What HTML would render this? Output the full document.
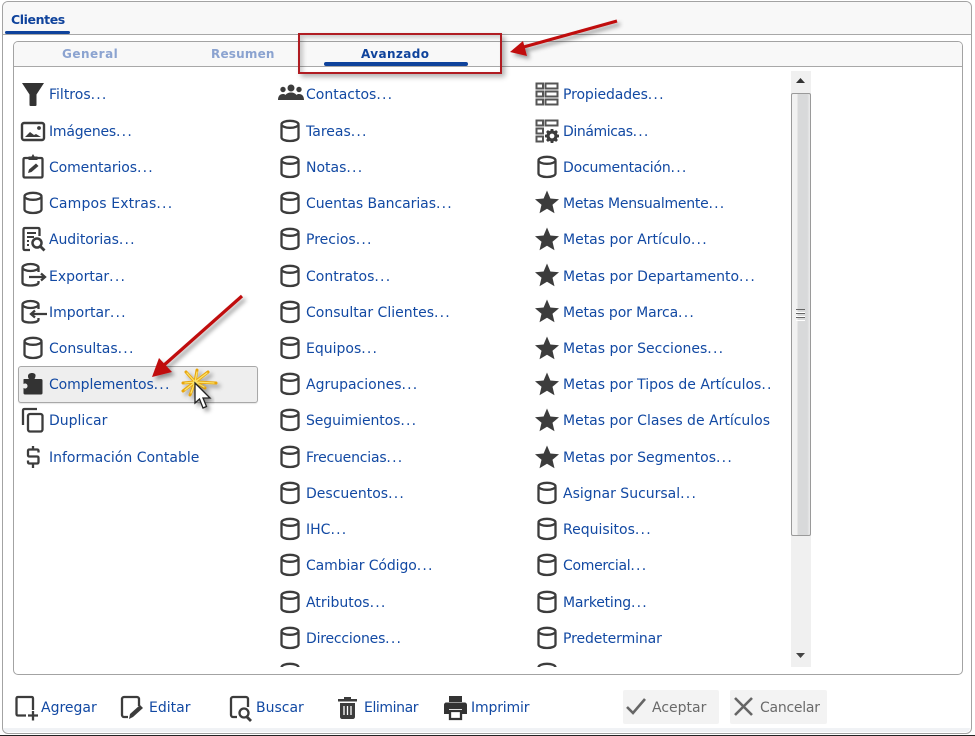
<!DOCTYPE html>
<html><head><meta charset="utf-8">
<style>
html,body{margin:0;padding:0;width:975px;height:736px;overflow:hidden;background:#fff;font-family:"DejaVu Sans","Liberation Sans",sans-serif}
.a{position:absolute}
.t{position:absolute;font-size:14px;line-height:18px;margin-top:1px;color:#1249a3;white-space:nowrap}
.t s{text-decoration:none;letter-spacing:1.2px}
svg.i{position:absolute;width:26px;height:26px;overflow:visible}
</style></head><body>
<svg width="0" height="0" style="position:absolute">
<defs>
<symbol id="db" viewBox="0 0 26 26"><g fill="none" stroke="#3c3c3c" stroke-width="2.300"><path d="M4.500 7v12.500c0 2 3.800 3.500 8.500 3.500s8.500-1.500 8.500-3.500V7"/><ellipse cx="13" cy="6.300" rx="8.500" ry="3.500"/></g></symbol>
<symbol id="star" viewBox="0 0 26 26"><path d="M13 1.500l3.400 8 8.600.7-6.500 5.600 2 8.400L13 19.700 5.500 24.200l2-8.400L1 10.200l8.600-.7z" fill="#3c3c3c"/></symbol>
<symbol id="funnel" viewBox="0 0 26 26"><path d="M2 2h22l-7.500 11.500V24c0 .6-.4 1-1 1h-5c-.6 0-1-.4-1-1V13.500z" fill="#333"/></symbol>
<symbol id="people" viewBox="0 0 26 26"><g fill="#3c3c3c"><circle cx="13" cy="7" r="3.500"/><circle cx="5" cy="8.500" r="2.700"/><circle cx="21" cy="8.500" r="2.700"/><path d="M0 19c0-4 2-6 5-6 1 0 2 .3 2.500 1 1-1.500 3-2.500 5.500-2.500s4.500 1 5.500 2.500c.5-.7 1.500-1 2.500-1 3 0 5 2 5 6z"/></g></symbol>
<symbol id="img" viewBox="0 0 26 26"><rect x="2" y="5" width="22" height="17" rx="2" fill="none" stroke="#3c3c3c" stroke-width="2.400"/><path d="M5 19l5-5 4 3 2-1 5 3z" fill="#3c3c3c"/><circle cx="19" cy="10" r="1.900" fill="#3c3c3c"/></symbol>
<symbol id="clip" viewBox="0 0 26 26"><path d="M9 5H5c-1 0-1.500 .5-1.500 1.500V23c0 1 .5 1.500 1.500 1.500h16c1 0 1.500-.5 1.500-1.500V6.500C22.500 5.500 22 5 21 5h-4" fill="none" stroke="#3c3c3c" stroke-width="2.300"/><path d="M8.500 7V3.500h3L13 1l1.500 2.500h3V7z" fill="#3c3c3c"/><path d="M8 20l1-3.500 7-6 2.500 2.500-7 6z" fill="#3c3c3c"/></symbol>
<symbol id="audit" viewBox="0 0 26 26"><path d="M10 24H5c-1 0-1.500-.5-1.500-1.500V3.500C3.500 2.500 4 2 5 2h13c1 0 1.500.5 1.500 1.500V10" fill="none" stroke="#3c3c3c" stroke-width="2.300"/><path d="M7 7h9M7 11h7M7 15h2M7 19h2" stroke="#3c3c3c" stroke-width="2"/><circle cx="17" cy="17" r="4.500" fill="none" stroke="#3c3c3c" stroke-width="2.500"/><path d="M20 20l4.500 4.500" stroke="#3c3c3c" stroke-width="2.800"/></symbol>
<symbol id="exp" viewBox="0 0 26 26"><g fill="none" stroke="#3c3c3c" stroke-width="2.300"><path d="M1.500 6v14.500c0 2 3.500 3 8 3s8-1 8-3V19M17.500 10V6"/><ellipse cx="9.500" cy="5.500" rx="8" ry="3.500"/><path d="M8 15h16M20 11.500l4 3.500-4 3.500"/></g></symbol>
<symbol id="imp" viewBox="0 0 26 26"><g fill="none" stroke="#3c3c3c" stroke-width="2.300"><path d="M1.500 6v14.500c0 2 3.500 3 8 3s8-1 8-3V19M17.500 10V6"/><ellipse cx="9.500" cy="5.500" rx="8" ry="3.500"/><path d="M10 15h16M14 11.500L10 15l4 3.500"/></g></symbol>
<symbol id="puz" viewBox="0 0 26 26"><path d="M4 9h5c-1-1-1-2-1-3 0-2 2-3 4-3s4 1 3.500 3c0 1-.5 2-1 3H21c1 0 1.500.5 1.500 1.500V23c0 1-.5 1.500-1.500 1.500H5c-1 0-1.500-.5-1.500-1.500v-5c1.500 1 4 .5 4-2s-2.500-3-4-2v-4.500C3.500 9.500 3.500 9 4 9z" fill="#333"/></symbol>
<symbol id="dup" viewBox="0 0 26 26"><g fill="none" stroke="#3c3c3c" stroke-width="2.300"><path d="M3 18V3.500C3 2.500 3.500 2 4.500 2H17"/><rect x="8" y="7" width="14.500" height="17.500" rx="2"/></g></symbol>
<symbol id="usd" viewBox="0 0 26 26"><path d="M18.500 8.500V7c0-1-.5-1.500-1.500-1.500H9.500C8.500 5.500 8 6 8 7v4c0 1 .5 1.500 1.500 1.500h7.500c1 0 1.500.5 1.500 1.500v4c0 1-.5 1.500-1.500 1.500H9.500C8.500 19.500 8 19 8 18v-1.500M13 2v3.500M13 19.500V24" fill="none" stroke="#3c3c3c" stroke-width="2.300"/></symbol>
<symbol id="prop" viewBox="0 0 26 26"><g fill="none" stroke="#555" stroke-width="2"><rect x="2.500" y="2.500" width="6.500" height="5"/><rect x="11.500" y="2.500" width="12" height="5"/><rect x="2.500" y="10.500" width="6.500" height="5"/><rect x="11.500" y="10.500" width="12" height="5"/><rect x="2.500" y="18.500" width="6.500" height="5"/><rect x="11.500" y="18.500" width="12" height="5"/></g></symbol>
<symbol id="din" viewBox="0 0 26 26"><g fill="none" stroke="#555" stroke-width="2"><rect x="2.500" y="2.500" width="6.500" height="5"/><rect x="11.500" y="2.500" width="12" height="5"/><rect x="2.500" y="10.500" width="6.500" height="5"/><rect x="2.500" y="18.500" width="6.500" height="5"/></g><circle cx="18" cy="18" r="4" fill="none" stroke="#3c3c3c" stroke-width="3.200"/><path d="M18 11v3M18 22v3M11 18h3M22 18h3M13 13l2 2M21 21l2 2M13 23l2-2M21 15l2-2" stroke="#3c3c3c" stroke-width="2.800"/></symbol>
</defs>
</svg>

<!-- outer frame -->
<div class="a" style="left:2px;top:1px;width:968px;height:731px;border:1px solid #a3a3a3;border-radius:6px;background:#fff"></div>
<div class="a" style="left:3px;top:2px;width:968px;height:32px;background:#f8f8f8;border-radius:5px 5px 0 0;border-bottom:1px solid #a8a8a8"></div>
<div class="a" style="left:3px;top:728px;width:967px;height:4px;background:#f0f2f5;border-radius:0 0 5px 5px"></div>
<div class="a" style="left:0;top:735px;width:975px;height:1px;background:#222"></div>
<div class="a" style="left:11px;top:11px;font-size:12.500px;font-weight:bold;line-height:18px;color:#0f439c;letter-spacing:-.4px">Clientes</div>
<div class="a" style="left:5px;top:31px;width:65px;height:3px;background:#0f439c;border-radius:2px"></div>

<!-- panel -->
<div class="a" style="left:13px;top:41px;width:948px;height:632px;border:1px solid #a3a3a3;border-radius:5px;background:#fff"></div>
<div class="a" style="left:14px;top:42px;width:948px;height:24px;background:#f8f8f8;border-bottom:1px solid #a8a8a8;border-radius:4px 4px 0 0"></div>
<div class="a" style="left:62px;top:45px;font-size:12px;font-weight:bold;line-height:18px;color:#8ba3d0;letter-spacing:.5px">General</div>
<div class="a" style="left:211px;top:45px;font-size:12px;font-weight:bold;line-height:18px;color:#8ba3d0;letter-spacing:.2px">Resumen</div>
<div class="a" style="left:361px;top:45px;font-size:12px;font-weight:bold;line-height:18px;color:#0f439c;letter-spacing:.4px">Avanzado</div>
<div class="a" style="left:324px;top:62px;width:144px;height:4px;background:#0f439c;border-radius:2px"></div>
<div class="a" style="left:298px;top:33px;width:200px;height:37px;border:2px solid #b01c22;box-shadow:3px 3px 5px rgba(0,0,0,.3),inset 3px 3px 5px rgba(0,0,0,.2)"></div>

<!-- highlighted row -->
<div class="a" style="left:18px;top:366px;width:238px;height:35px;background:#eeeeee;border:1px solid #a8a8a8;border-radius:3px;box-shadow:0 1px 1px rgba(0,0,0,.1)"></div>

<!-- column 1 -->
<svg class="i" style="left:20px;top:81px"><use href="#funnel"/></svg><div class="t" style="left:49px;top:85px">Filtros<s>...</s></div>
<svg class="i" style="left:20px;top:118px"><use href="#img"/></svg><div class="t" style="left:49px;top:122px;letter-spacing:-.2px">Imágenes<s>...</s></div>
<svg class="i" style="left:20px;top:153px"><use href="#clip"/></svg><div class="t" style="left:49px;top:158px;letter-spacing:-.1px">Comentarios<s>...</s></div>
<svg class="i" style="left:20px;top:190px"><use href="#db"/></svg><div class="t" style="left:49px;top:194px;letter-spacing:.15px">Campos Extras<s>...</s></div>
<svg class="i" style="left:20px;top:226px"><use href="#audit"/></svg><div class="t" style="left:49px;top:230px;letter-spacing:-.1px">Auditorias<s>...</s></div>
<svg class="i" style="left:21px;top:262px"><use href="#exp"/></svg><div class="t" style="left:49px;top:267px">Exportar<s>...</s></div>
<svg class="i" style="left:21px;top:299px"><use href="#imp"/></svg><div class="t" style="left:49px;top:303px">Importar<s>...</s></div>
<svg class="i" style="left:20px;top:335px"><use href="#db"/></svg><div class="t" style="left:49px;top:339px">Consultas<s>...</s></div>
<svg class="i" style="left:20px;top:370px"><use href="#puz"/></svg><div class="t" style="left:49px;top:375px;letter-spacing:-.1px">Complementos<s>...</s></div>
<svg class="i" style="left:20px;top:407px"><use href="#dup"/></svg><div class="t" style="left:49px;top:411px">Duplicar</div>
<svg class="i" style="left:20px;top:444px"><use href="#usd"/></svg><div class="t" style="left:49px;top:448px">Información Contable</div>

<!-- column 2 -->
<svg class="i" style="left:278px;top:81px"><use href="#people"/></svg><div class="t" style="left:306px;top:85px">Contactos<s>...</s></div>
<svg class="i" style="left:277px;top:118px"><use href="#db"/></svg><div class="t" style="left:306px;top:122px">Tareas<s>...</s></div>
<svg class="i" style="left:277px;top:154px"><use href="#db"/></svg><div class="t" style="left:306px;top:158px">Notas<s>...</s></div>
<svg class="i" style="left:277px;top:190px"><use href="#db"/></svg><div class="t" style="left:306px;top:194px;letter-spacing:-.05px">Cuentas Bancarias<s>...</s></div>
<svg class="i" style="left:277px;top:226px"><use href="#db"/></svg><div class="t" style="left:306px;top:230px">Precios<s>...</s></div>
<svg class="i" style="left:277px;top:263px"><use href="#db"/></svg><div class="t" style="left:306px;top:267px">Contratos<s>...</s></div>
<svg class="i" style="left:277px;top:299px"><use href="#db"/></svg><div class="t" style="left:306px;top:303px">Consultar Clientes<s>...</s></div>
<svg class="i" style="left:277px;top:335px"><use href="#db"/></svg><div class="t" style="left:306px;top:339px">Equipos<s>...</s></div>
<svg class="i" style="left:277px;top:371px"><use href="#db"/></svg><div class="t" style="left:306px;top:375px">Agrupaciones<s>...</s></div>
<svg class="i" style="left:277px;top:407px"><use href="#db"/></svg><div class="t" style="left:306px;top:411px;letter-spacing:-.1px">Seguimientos<s>...</s></div>
<svg class="i" style="left:277px;top:444px"><use href="#db"/></svg><div class="t" style="left:306px;top:448px;letter-spacing:-.2px">Frecuencias<s>...</s></div>
<svg class="i" style="left:277px;top:480px"><use href="#db"/></svg><div class="t" style="left:306px;top:484px">Descuentos<s>...</s></div>
<svg class="i" style="left:277px;top:516px"><use href="#db"/></svg><div class="t" style="left:306px;top:520px">IHC<s>...</s></div>
<svg class="i" style="left:277px;top:552px"><use href="#db"/></svg><div class="t" style="left:306px;top:556px;letter-spacing:-.1px">Cambiar Código<s>...</s></div>
<svg class="i" style="left:277px;top:589px"><use href="#db"/></svg><div class="t" style="left:306px;top:593px">Atributos<s>...</s></div>
<svg class="i" style="left:277px;top:625px"><use href="#db"/></svg><div class="t" style="left:306px;top:629px;letter-spacing:-.2px">Direcciones<s>...</s></div>

<!-- column 3 -->
<svg class="i" style="left:534px;top:81px"><use href="#prop"/></svg><div class="t" style="left:563px;top:85px;letter-spacing:-.1px">Propiedades<s>...</s></div>
<svg class="i" style="left:534px;top:118px"><use href="#din"/></svg><div class="t" style="left:563px;top:122px;letter-spacing:-.4px">Dinámicas<s>...</s></div>
<svg class="i" style="left:534px;top:154px"><use href="#db"/></svg><div class="t" style="left:563px;top:158px;letter-spacing:-.2px">Documentación<s>...</s></div>
<svg class="i" style="left:534px;top:189px"><use href="#star"/></svg><div class="t" style="left:563px;top:194px;letter-spacing:-.25px">Metas Mensualmente<s>...</s></div>
<svg class="i" style="left:534px;top:226px"><use href="#star"/></svg><div class="t" style="left:563px;top:230px">Metas por Artículo<s>...</s></div>
<svg class="i" style="left:534px;top:262px"><use href="#star"/></svg><div class="t" style="left:563px;top:267px">Metas por Departamento<s>...</s></div>
<svg class="i" style="left:534px;top:298px"><use href="#star"/></svg><div class="t" style="left:563px;top:303px;letter-spacing:-.1px">Metas por Marca<s>...</s></div>
<svg class="i" style="left:534px;top:335px"><use href="#star"/></svg><div class="t" style="left:563px;top:339px">Metas por Secciones<s>...</s></div>
<svg class="i" style="left:534px;top:371px"><use href="#star"/></svg><div class="t" style="left:563px;top:375px;width:207px;overflow:hidden">Metas por Tipos de Artículos<s>...</s></div>
<svg class="i" style="left:534px;top:407px"><use href="#star"/></svg><div class="t" style="left:563px;top:411px">Metas por Clases de Artículos</div>
<svg class="i" style="left:534px;top:444px"><use href="#star"/></svg><div class="t" style="left:563px;top:448px">Metas por Segmentos<s>...</s></div>
<svg class="i" style="left:534px;top:480px"><use href="#db"/></svg><div class="t" style="left:563px;top:484px">Asignar Sucursal<s>...</s></div>
<svg class="i" style="left:534px;top:516px"><use href="#db"/></svg><div class="t" style="left:563px;top:520px">Requisitos<s>...</s></div>
<svg class="i" style="left:534px;top:552px"><use href="#db"/></svg><div class="t" style="left:563px;top:556px;letter-spacing:-.3px">Comercial<s>...</s></div>
<svg class="i" style="left:534px;top:589px"><use href="#db"/></svg><div class="t" style="left:563px;top:593px;letter-spacing:-.2px">Marketing<s>...</s></div>
<svg class="i" style="left:534px;top:625px"><use href="#db"/></svg><div class="t" style="left:563px;top:629px;letter-spacing:-.1px">Predeterminar</div>

<!-- clipped partial row -->
<div class="a" style="left:270px;top:660px;width:300px;height:7px;overflow:hidden">
<svg class="i" style="left:7px;top:1px"><use href="#db"/></svg>
<svg class="i" style="left:264px;top:1px"><use href="#db"/></svg>
</div>

<!-- scrollbar -->
<div class="a" style="left:791px;top:71px;width:20px;height:596px;background:#f0f0f0"></div>
<div class="a" style="left:791px;top:93px;width:18px;height:441px;border:1px solid #9a9a9a;border-radius:2px;background:linear-gradient(90deg,#f2f2f2 0,#f2f2f2 30%,#d8d9da 32%,#d8d9da 85%,#ececec 100%)"></div>
<div class="a" style="left:796px;top:309px;width:9px;height:2px;border-top:1px solid #666;border-bottom:1px solid #fff"></div>
<div class="a" style="left:796px;top:313px;width:9px;height:2px;border-top:1px solid #666;border-bottom:1px solid #fff"></div>
<div class="a" style="left:796px;top:317px;width:9px;height:2px;border-top:1px solid #666;border-bottom:1px solid #fff"></div>
<svg class="a" style="left:796px;top:78px" width="10" height="6"><path d="M0 5h9L4.500 0z" fill="#333"/></svg>
<svg class="a" style="left:796px;top:653px" width="10" height="6"><path d="M0 0h9L4.500 5z" fill="#444"/></svg>

<!-- toolbar -->
<svg class="a" style="left:14px;top:695px;overflow:visible" width="26" height="26"><path d="M12 20.500H4c-1 0-1.500-.5-1.500-1.500V3.500C2.500 2.500 3 2 4 2h13.500c1 0 1.500.5 1.500 1.500V15" fill="none" stroke="#3c3c3c" stroke-width="2.300"/><path d="M14 20.500h10M19 16v9.500" stroke="#3c3c3c" stroke-width="2.300"/></svg>
<div class="t" style="left:41px;top:698px">Agregar</div>
<svg class="a" style="left:118px;top:695px;overflow:visible" width="26" height="26"><path d="M10 22H6c-1 0-2-1-2-2V4c0-1 1-2 2-2h13c1 0 2 1 2 2v7" fill="none" stroke="#3c3c3c" stroke-width="2.300"/><path d="M11 24l1-5 10-9 3 3-10 9z" fill="#3c3c3c"/></svg>
<div class="t" style="left:149px;top:698px">Editar</div>
<svg class="a" style="left:227px;top:695px;overflow:visible" width="26" height="26"><path d="M10 22H6c-1 0-2-1-2-2V4c0-1 1-2 2-2h13c1 0 2 1 2 2v8" fill="none" stroke="#3c3c3c" stroke-width="2.300"/><circle cx="17" cy="18" r="4.500" fill="none" stroke="#3c3c3c" stroke-width="2.300"/><path d="M20 22l4 4" stroke="#3c3c3c" stroke-width="2.800"/></svg>
<div class="t" style="left:256px;top:698px">Buscar</div>
<svg class="a" style="left:335px;top:695px;overflow:visible" width="26" height="26"><path d="M3 4h19v2.500H3zM9 4V2h7v2zM5 8h15v14c0 1-1 2-2 2H7c-1 0-2-1-2-2z" fill="#3c3c3c"/><path d="M9 11v9M12.500 11v9M16 11v9" stroke="#fff" stroke-width="1.300"/></svg>
<div class="t" style="left:364px;top:698px;letter-spacing:-.4px">Eliminar</div>
<svg class="a" style="left:443px;top:695px;overflow:visible" width="26" height="26"><path d="M6 1h13v6H6zM1 10c0-1.500 1-2.500 2.500-2.500h18c1.500 0 2.500 1 2.500 2.500v9h-5v-5H6v5H1z" fill="#333"/><path d="M7 16h11v8H7z" fill="none" stroke="#333" stroke-width="2.300"/></svg>
<div class="t" style="left:471px;top:698px;letter-spacing:-.15px">Imprimir</div>

<div class="a" style="left:623px;top:690px;width:96px;height:34px;background:#f3f3f3;border-radius:2px"></div>
<svg class="a" style="left:626px;top:696px" width="22" height="22"><path d="M1 11l6 6L19 3" fill="none" stroke="#666" stroke-width="2.600"/></svg>
<div class="t" style="left:652px;top:698px;color:#6a6a6a">Aceptar</div>
<div class="a" style="left:730px;top:690px;width:97px;height:34px;background:#f3f3f3;border-radius:2px"></div>
<svg class="a" style="left:734px;top:697px" width="20" height="20"><path d="M1 1l17 17M18 1L1 18" fill="none" stroke="#666" stroke-width="2.600"/></svg>
<div class="t" style="left:760px;top:698px;color:#6a6a6a;letter-spacing:-.25px">Cancelar</div>

<!-- annotations -->
<svg class="a" style="left:0;top:0;overflow:visible" width="975" height="736">
<defs><filter id="s" x="-20%" y="-20%" width="150%" height="150%"><feDropShadow dx="3" dy="3" stdDeviation="2" flood-color="#000" flood-opacity=".4"/></filter></defs>
<g filter="url(#s)">
<path d="M617 21L520 48" stroke="#c00a0e" stroke-width="3.200"/><path d="M510 52L523 41 527 56z" fill="#c00a0e"/>
<path d="M242 296L163 366" stroke="#c00a0e" stroke-width="3.200"/><path d="M152 377L159 358 172 372z" fill="#c00a0e"/>
</g>
<g filter="url(#s)">
<g stroke="#e8a50d" stroke-width="3" stroke-linecap="round">
<path d="M195 382L216 383M195 382L208 372M195 382L197 370M195 382L186 372M195 382L183 391M195 382L190 395M195 382L183 383M195 382L205 388"/>
</g>
<g stroke="#fbe36a" stroke-width="1.300" stroke-linecap="round">
<path d="M195 382L214 383M195 382L207 373M195 382L197 372M195 382L187 373M195 382L185 390M195 382L191 393M195 382L185 383M195 382L204 387"/>
</g>
</g>
<path d="M195 383v20l4.500-4 3.500 9 3.500-1.500-3.500-8.500h7z" fill="#fff" stroke="#222" stroke-width="1.300" filter="url(#s)"/>
</svg>
</body></html>
